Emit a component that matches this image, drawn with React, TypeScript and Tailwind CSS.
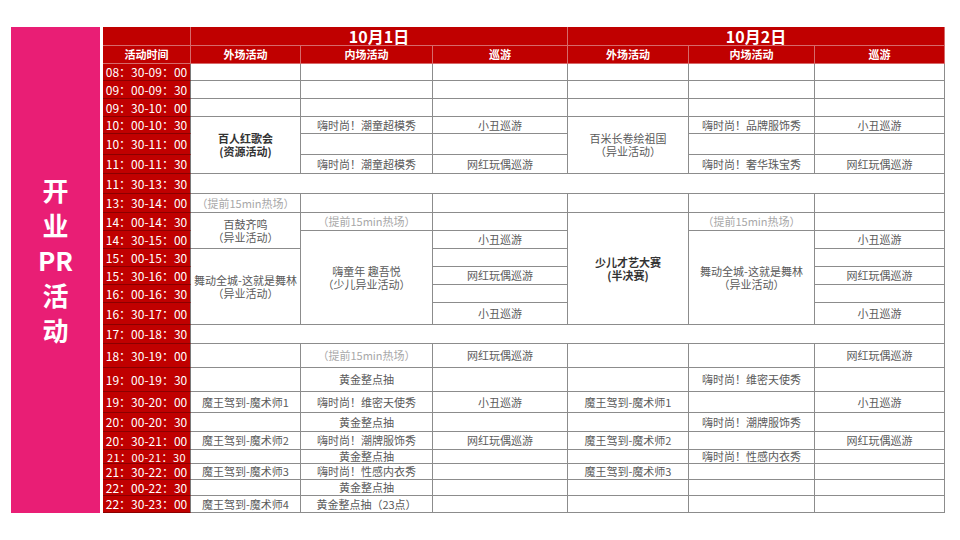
import type { ReactNode } from "react";

const cell =
  "border-r border-b border-[#8c8c8c] flex items-center justify-center text-center text-[11px] leading-[13px] text-[#5a5a5a] whitespace-pre-line";
const timeCell =
  "bg-[#c00000] border-b border-r border-b-[#8a0000] border-r-[#7a7a7a] flex items-center justify-center leading-[12px] text-white";
const headCell =
  "bg-[#c00000] border-r border-b border-[#d66a6a] flex items-center justify-center text-white font-bold";

function C({ children, className = "" }: { children?: ReactNode; className?: string }) {
  return <div className={`${cell} ${className}`}>{children}</div>;
}

function Tm({ t, small }: { t: string; small?: boolean }) {
  return (
    <div className={`${timeCell} ${small ? "text-[11px] tracking-[0.4px]" : "text-[12px]"}`}>
      {t}
    </div>
  );
}

function Warm() {
  return <C className="text-[#a8a8a8]">（提前15min热场）</C>;
}

export default function App() {
  return (
    <div className="w-[960px] h-[540px] bg-white flex items-start gap-[3px] pl-[11px] pt-[27px] font-['Noto_Sans_CJK_SC',sans-serif]">
      <div className="w-[89px] h-[486px] bg-[#e91e75] flex flex-col items-center justify-center pb-[22px] text-white text-[26px] leading-[35px] font-bold">
        <span>开</span>
        <span>业</span>
        <span>PR</span>
        <span>活</span>
        <span>动</span>
      </div>

      <div className="grid grid-cols-[88px_110px_132px_135px_121px_126px_130px] grid-rows-[19px_18px_17px_18px_18px_17px_21px_19px_20px_19px_18px_18px_18px_18px_18px_22px_19px_24px_24px_21px_19px_18px_14px_16px_16px_17px]">
        {/* header */}
        <div className={headCell}></div>
        <div className={`${headCell} col-span-3 text-[16px]`}>10月1日</div>
        <div className={`${headCell} col-span-3 text-[16px]`}>10月2日</div>
        <div className={`${headCell} text-[11px]`}>活动时间</div>
        <div className={`${headCell} text-[11px]`}>外场活动</div>
        <div className={`${headCell} text-[11px]`}>内场活动</div>
        <div className={`${headCell} text-[11px]`}>巡游</div>
        <div className={`${headCell} text-[11px]`}>外场活动</div>
        <div className={`${headCell} text-[11px]`}>内场活动</div>
        <div className={`${headCell} text-[11px]`}>巡游</div>

        {/* morning */}
        <Tm t="08：30-09：00" />
        <C /><C /><C /><C /><C /><C />
        <Tm t="09：00-09：30" />
        <C /><C /><C /><C /><C /><C />
        <Tm t="09：30-10：00" />
        <C /><C /><C /><C /><C /><C />

        <Tm t="10：00-10：30" />
        <C className="row-span-3 font-bold text-[#333333]">{"百人红歌会\n(资源活动)"}</C>
        <C>嗨时尚！潮童超模秀</C>
        <C>小丑巡游</C>
        <C className="row-span-3">{"百米长卷绘祖国\n（异业活动）"}</C>
        <C>嗨时尚！品牌服饰秀</C>
        <C>小丑巡游</C>
        <Tm t="10：30-11：00" />
        <C /><C /><C /><C />
        <Tm t="11：00-11：30" />
        <C>嗨时尚！潮童超模秀</C>
        <C>网红玩偶巡游</C>
        <C>嗨时尚！奢华珠宝秀</C>
        <C>网红玩偶巡游</C>

        <Tm t="11：30-13：30" />
        <C className="col-span-6" />

        {/* afternoon */}
        <Tm t="13：30-14：00" />
        <Warm />
        <C /><C /><C /><C /><C />
        <Tm t="14：00-14：30" />
        <C className="row-span-2">{"百鼓齐鸣\n（异业活动）"}</C>
        <Warm />
        <C />
        <C className="row-span-6 font-bold text-[#333333]">{"少儿才艺大赛\n(半决赛)"}</C>
        <Warm />
        <C />
        <Tm t="14：30-15：00" />
        <C className="row-span-5 whitespace-pre">{"嗨童年  趣吾悦\n（少儿异业活动）"}</C>
        <C>小丑巡游</C>
        <C className="row-span-5">{"舞动全城-这就是舞林\n（异业活动）"}</C>
        <C>小丑巡游</C>
        <Tm t="15：00-15：30" />
        <C className="row-span-4">{"舞动全城-这就是舞林\n（异业活动）"}</C>
        <C />
        <C />
        <Tm t="15：30-16：00" />
        <C>网红玩偶巡游</C>
        <C>网红玩偶巡游</C>
        <Tm t="16：00-16：30" />
        <C /><C />
        <Tm t="16：30-17：00" />
        <C>小丑巡游</C>
        <C>小丑巡游</C>

        <Tm t="17：00-18：30" />
        <C className="col-span-6" />

        {/* evening */}
        <Tm t="18：30-19：00" />
        <C />
        <Warm />
        <C>网红玩偶巡游</C>
        <C /><C />
        <C>网红玩偶巡游</C>

        <Tm t="19：00-19：30" />
        <C />
        <C>黄金整点抽</C>
        <C /><C />
        <C>嗨时尚！维密天使秀</C>
        <C />

        <Tm t="19：30-20：00" />
        <C>魔王驾到-魔术师1</C>
        <C>嗨时尚！维密天使秀</C>
        <C>小丑巡游</C>
        <C>魔王驾到-魔术师1</C>
        <C />
        <C>小丑巡游</C>

        <Tm t="20：00-20：30" />
        <C />
        <C>黄金整点抽</C>
        <C /><C />
        <C>嗨时尚！潮牌服饰秀</C>
        <C />

        <Tm t="20：30-21：00" />
        <C>魔王驾到-魔术师2</C>
        <C>嗨时尚！潮牌服饰秀</C>
        <C>网红玩偶巡游</C>
        <C>魔王驾到-魔术师2</C>
        <C />
        <C>网红玩偶巡游</C>

        <Tm t="21：00-21：30" small />
        <C />
        <C>黄金整点抽</C>
        <C /><C />
        <C>嗨时尚！性感内衣秀</C>
        <C />

        <Tm t="21：30-22：00" />
        <C>魔王驾到-魔术师3</C>
        <C>嗨时尚！性感内衣秀</C>
        <C />
        <C>魔王驾到-魔术师3</C>
        <C /><C />

        <Tm t="22：00-22：30" />
        <C />
        <C>黄金整点抽</C>
        <C /><C /><C /><C />

        <Tm t="22：30-23：00" />
        <C>魔王驾到-魔术师4</C>
        <C>黄金整点抽（23点）</C>
        <C /><C /><C /><C />
      </div>
    </div>
  );
}
